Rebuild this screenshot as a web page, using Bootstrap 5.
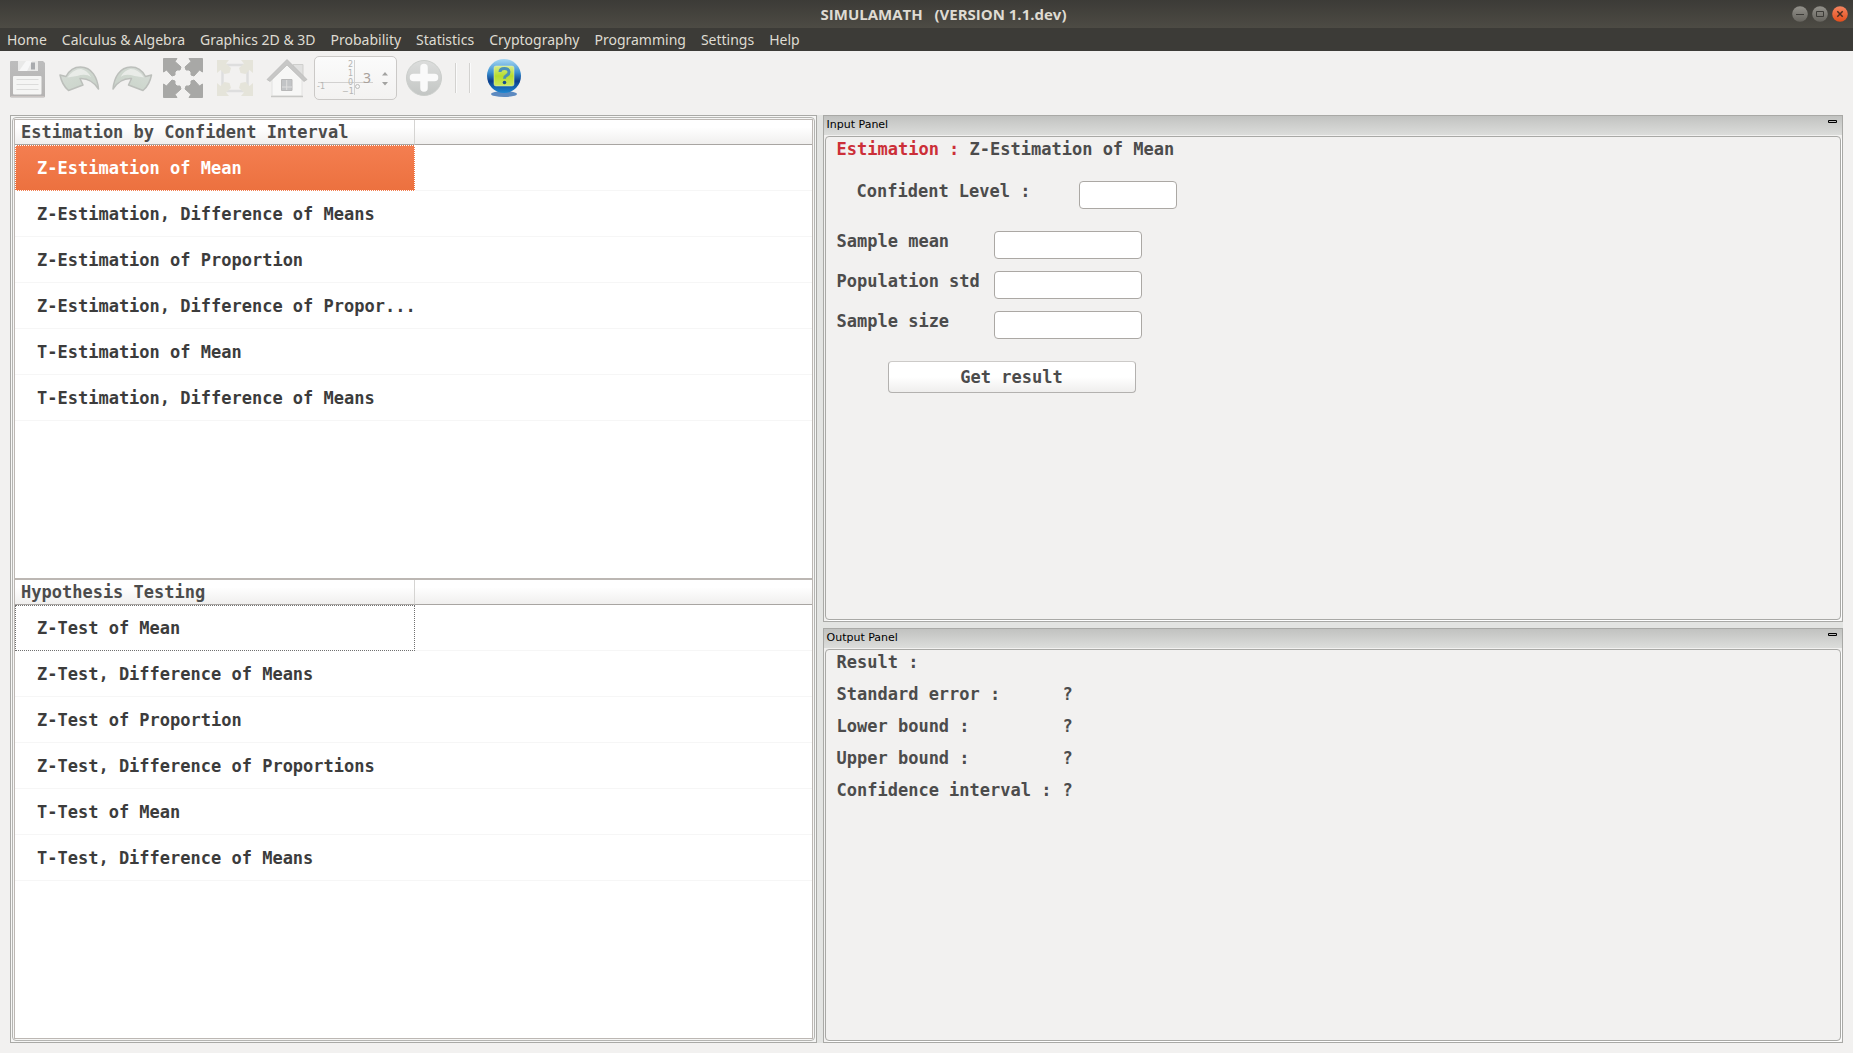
<!DOCTYPE html>
<html lang="en">
<head>
<meta charset="utf-8">
<meta name="viewport" content="width=device-width, initial-scale=1">
<title>SIMULAMATH (VERSION 1.1.dev)</title>
<link href="https://cdn.jsdelivr.net/npm/bootstrap@5.3.0/dist/css/bootstrap.min.css" rel="stylesheet">
<style>
body{background:#f2f1f0;font-family:"Noto Sans","Open Sans",sans-serif;font-size:14px;color:#4c4c4c}
button{border:0;background:none;padding:0;line-height:0}
svg{display:block}
.titlebar{height:28px;background:linear-gradient(#3c3b37,#4d4b44);color:#dfdbd2;padding:0 5px 0 95px}
.titlebar h1{font-size:15px;line-height:28px;font-weight:700;font-family:"Open Sans","Noto Sans",sans-serif}
.menubar{height:23px;background:#3c3b37;padding:0 7px;gap:15px}
.menubar a{color:#dfdbd2;text-decoration:none;line-height:23px;font-size:14px}
.tools{height:64px;padding:5px 10px 0}
.tools .tool-row{height:44px}
.plotcount{width:83px;height:44px;border:1px solid #cbc9c7;border-radius:5px;background:linear-gradient(#fbfbfb,#f3f2f1)}
.plotcount input{position:absolute;left:48px;top:11px;width:18px;height:20px;border:0;padding:0;background:none;color:#a9a19b;font-size:14px;line-height:20px;appearance:textfield;-moz-appearance:textfield}
.plotcount input::-webkit-inner-spin-button{-webkit-appearance:none;margin:0}
.vline{width:2px;height:30px;background:linear-gradient(90deg,#d3d2d0 50%,#fbfbfb 50%)}
.mono{font-family:"DejaVu Sans Mono","Liberation Mono",monospace;font-weight:700;font-size:17px;line-height:20px}
.work{padding:0 10px 10px}
.leftside{flex:0 0 44%;border:1px solid #a9a9a6;padding:1px;background:#f6f6f5}
.frame-in{border:1px solid #b5b5b2;border-radius:4px;padding:1px}
.split{background:#e3e4e2;flex:0 0 6px}
.tree{flex:1 1 0;border:1px solid #bcb7b3;background:#fff}
.tree table{width:100%;table-layout:fixed;border-collapse:separate;border-spacing:0;white-space:nowrap}
.tree col.names{width:400px}
.tree th{height:25px;padding:0 6px;background:linear-gradient(#fff 30%,#f0efee);border-bottom:1px solid #a8a5a2;vertical-align:middle}
.tree th:first-child{border-right:1px solid #d5d4d2}
.tree td{height:46px;padding:0 0 0 22px;border-bottom:1px solid #f6f6f6;color:#3c3c3c;vertical-align:middle}
.tree td.picked{background:linear-gradient(#f47e50,#ec713f);color:#fff;border:1px dotted #fff;padding-left:21px}
.tree td.focused{border:1px dotted #707070;padding-left:21px}
.rightside{flex:1 1 0;background:#e3e4e2;gap:6px}
.dock{border:1px solid #a9a9a6;background:#f2f1f0;min-height:0}
.dock.in{flex:507 1 0}
.dock.out{flex:415 1 0}
.dock-head{height:19px;background:linear-gradient(#c1c2c0,#dcdddb);padding:0 5px 0 3px}
.dock-head h2{font:11px/18px "DejaVu Sans","Noto Sans",sans-serif;color:#000}
.dock-head button{padding:4px 0 4px 4px}
.dock-body{border:1px solid #a9a9a6;border-radius:4px;margin:1px;padding:2px 11px;box-shadow:1px 1px 0 #fff}
.field{height:28px}
.field input{height:28px;border:1px solid #aba8a4;border-radius:4px;background:#fff;padding:2px 6px;font-size:15px}
.field.level{margin:22px 0;padding-left:20px}
.field.level label{width:222px}
.field.level input{width:98px}
.sample label{width:157px}
.sample input{width:148px}
.sample{gap:12px}
.result-btn{width:248px;height:32px;margin:22px 0 0 51px;border:1px solid #b3b1af;border-top-color:#cccac8;border-radius:4px;background:linear-gradient(#fff 50%,#efeeed);color:#4c4c4c}
.results{display:grid;grid-template-columns:226px 1fr;row-gap:12px}
.red{color:#cc2f38}
</style>
</head>
<body class="vh-100 d-flex flex-column overflow-hidden">
<header class="titlebar d-flex align-items-center">
  <h1 class="m-0 flex-fill text-center">SIMULAMATH&nbsp;&nbsp; (VERSION 1.1.dev)</h1>
  <div class="d-flex gap-1">
    <button aria-label="Minimize"><svg width="16" height="16" viewBox="0 0 16 16"><circle cx="8" cy="8" r="7.8" fill="url(#gr)"/><path d="M4 8.5h8" stroke="#3c3b37"/></svg></button>
    <button aria-label="Maximize"><svg width="16" height="16" viewBox="0 0 16 16"><defs><linearGradient id="gr" x2="0" y2="1"><stop stop-color="#93918b"/><stop offset="1" stop-color="#66645e"/></linearGradient></defs><circle cx="8" cy="8" r="7.8" fill="url(#gr)"/><path d="M4.5 5.5h7v5h-7z" fill="none" stroke="#3c3b37"/></svg></button>
    <button aria-label="Close"><svg width="16" height="16" viewBox="0 0 16 16"><defs><linearGradient id="og" x2="0" y2="1"><stop stop-color="#f58460"/><stop offset="1" stop-color="#e34e1c"/></linearGradient></defs><circle cx="8" cy="8" r="7.8" fill="url(#og)"/><path d="M5.3 5.3l5.4 5.4M10.700 5.3l-5.400 5.400" stroke="#4a2d20" stroke-width="1.500"/></svg></button>
  </div>
</header>
<nav class="menubar d-flex">
  <a href="#">Home</a><a href="#">Calculus &amp; Algebra</a><a href="#">Graphics 2D &amp; 3D</a><a href="#">Probability</a><a href="#">Statistics</a><a href="#">Cryptography</a><a href="#">Programming</a><a href="#">Settings</a><a href="#">Help</a>
</nav>
<div class="tools">
 <div class="tool-row d-flex align-items-center">
  <button aria-label="Save"><svg width="48" height="44" viewBox="0 0 48 44"><defs><linearGradient id="sv" x2="0" y2="1"><stop stop-color="#bdbdbd"/><stop offset="1" stop-color="#b5b3b2"/></linearGradient></defs><path d="M0 6q0-1 1-1h32l2 2v33q0 1.500-1.500 1.500h-32Q0 41.500 0 40z" fill="url(#sv)"/><path d="M8 5h20v10H8z" fill="#e9e9e8"/><path d="M16 5h6l-5 10h-8z" fill="#f7f7f7"/><rect x="21" y="6.500" width="4" height="7" fill="#a9abae"/><rect x="3" y="20" width="28.500" height="18.500" rx="1" fill="#f5f5f4"/><path d="M6.500 23.500h22M6.500 28.500h22M6.500 33.500h22" stroke="#dcdcdb"/><path d="M1 40.500h33" stroke="#ccc6c4"/></svg></button>
  <button aria-label="Undo"><svg width="52" height="44" viewBox="0 0 52 44"><defs><linearGradient id="ud" x2="1" y2="1"><stop stop-color="#d8dbd8"/><stop offset=".5" stop-color="#cfd8cf"/><stop offset="1" stop-color="#c9d0c9"/></linearGradient></defs><path d="M2 19l6 1.500Q13 11 22.500 11C34 11 39.500 22 40.500 33 36 26 31 22 22 22.500l3 6.500-14.500 5.500Q4 29 2 19z" fill="url(#ud)" stroke="#bcbfbb" stroke-width="1.500" stroke-linejoin="round"/><path d="M9.500 21.500Q15 13 23 13q6 1 10 8-5-4-14-1z" fill="#f0f1ef" opacity=".75"/></svg></button>
  <button aria-label="Redo"><svg width="52" height="44" viewBox="0 0 52 44"><g transform="translate(43.5 0) scale(-1 1)"><path d="M2 19l6 1.500Q13 11 22.500 11C34 11 39.500 22 40.500 33 36 26 31 22 22 22.500l3 6.500-14.500 5.500Q4 29 2 19z" fill="url(#ud)" stroke="#bcbfbb" stroke-width="1.500" stroke-linejoin="round"/><path d="M9.500 21.500Q15 13 23 13q6 1 10 8-5-4-14-1z" fill="#f0f1ef" opacity=".75"/></g></svg></button>
  <button aria-label="Expand view"><svg width="54" height="44" viewBox="0 0 54 44"><g fill="#a8a8a6" stroke="#a8a8a6" stroke-linejoin="round"><path id="xa" d="M1.500 2.500H15L13 5.500l6 5.500-1 3h-3l-1 1-1 1v3l-3 1-5.500-6-3 2z"/><use href="#xa" transform="translate(42 0) scale(-1 1)"/><use href="#xa" transform="translate(0 44) scale(1 -1)"/><use href="#xa" transform="translate(42 44) scale(-1 -1)"/></g></svg></button>
  <button aria-label="Fit view"><svg width="50" height="44" viewBox="0 0 50 44"><rect x="6.500" y="9" width="25" height="26" fill="none" stroke="#dedede" stroke-width="2.500"/><g fill="#e5e4da"><path id="fa" d="M1 4h12l-3 3.500 5 4.500-1.500 5-5 1-4-4L1 17z"/><use href="#fa" transform="translate(38 0) scale(-1 1)"/><use href="#fa" transform="translate(0 44) scale(1 -1)"/><use href="#fa" transform="translate(38 44) scale(-1 -1)"/></g></svg></button>
  <button aria-label="Home view"><svg width="48" height="44" viewBox="0 0 48 44"><path d="M27 8.500h10V21l-10-9z" fill="#e1e1e0" stroke="#cfcfcd"/><path d="M6 23L21 8l15 15v17H6z" fill="#f7f7f6" stroke="#e2e2e1"/><path d="M5 40.500h32" stroke="#c8c8c6" stroke-width="1.500"/><path d="M1 23.500L21 3.500 41 23.500l-3 2L21 9 4 25.500z" fill="#c7c7c6" stroke="#b9b9b8" stroke-width=".7"/><path d="M15.500 23.500h10.500v11H15.500z" fill="#c2c4c6" stroke="#b8b8b8"/><path d="M20.700 24v10M16 31h10" stroke="#dedede"/></svg></button>
  <div class="plotcount position-relative">
    <svg width="81" height="42" viewBox="0 0 81 42" font-family="DejaVu Sans, sans-serif" font-size="8" fill="#b4b4b2"><path d="M3 25.500h55M39.500 3v35" stroke="#d2d1d0"/><text x="33" y="10">2</text><text x="33" y="19">1</text><text x="33" y="28">0</text><text x="2" y="32">-1</text><text x="27" y="37">−1</text><circle cx="42.500" cy="29.500" r="2" fill="#f6f6f6" stroke="#bcbcba"/><path d="M67 18.500l3-3.500 3 3.500zM67 25l3 3.500 3-3.500z" fill="#a3a3a1"/></svg>
    <input type="number" value="3" aria-label="Axes count">
  </div>
  <button class="ms-2" aria-label="Add"><svg width="50" height="44" viewBox="0 0 50 44"><defs><linearGradient id="pl" x2="0" y2="1"><stop stop-color="#dcdddc"/><stop offset="1" stop-color="#c3c6c4"/></linearGradient></defs><circle cx="19" cy="22" r="17.500" fill="url(#pl)" stroke="#cbcecb"/><path d="M19 11.500v20.500M8.500 21.500h21" stroke="#fafafa" stroke-width="7.500" stroke-linecap="round"/></svg></button>
  <span class="vline me-2"></span><span class="vline ms-1"></span>
  <button class="ms-3" aria-label="Help"><svg width="34" height="44" viewBox="1 0 34 44"><defs><linearGradient id="hb" x2="0" y2="1"><stop stop-color="#a9d8f2"/><stop offset=".4" stop-color="#3a8fd0"/><stop offset=".65" stop-color="#0b3f8c"/><stop offset="1" stop-color="#1f88d2"/></linearGradient><linearGradient id="hg" x2="0" y2="1"><stop stop-color="#d6ec8d"/><stop offset=".5" stop-color="#b7dc2c"/><stop offset="1" stop-color="#c9e860"/></linearGradient></defs><ellipse cx="18" cy="38" rx="13" ry="3" fill="#5d8ac0"/><circle cx="18" cy="20" r="17" fill="url(#hb)"/><rect x="8" y="10" width="20" height="20" rx="2" fill="url(#hg)" stroke="#e8f5bf" stroke-width=".5"/><path d="M14 16q0-3.500 4.500-3.500t4.500 3.500q0 2.500-2.500 3.500-2 1-2 3.200" fill="none" stroke="#4a8fb8" stroke-width="3"/><circle cx="18.500" cy="26.500" r="1.800" fill="#174f8d"/></svg></button>
 </div>
</div>
<main class="work d-flex flex-fill" style="min-height:0">
  <section class="leftside d-flex">
    <div class="frame-in d-flex flex-column flex-fill mono">
      <div class="tree"><table><colgroup><col class="names"><col></colgroup>
        <thead><tr><th>Estimation by Confident Interval</th><th></th></tr></thead>
        <tbody>
        <tr><td class="picked">Z-Estimation of Mean</td><td></td></tr>
        <tr><td>Z-Estimation, Difference of Means</td><td></td></tr>
        <tr><td>Z-Estimation of Proportion</td><td></td></tr>
        <tr><td>Z-Estimation, Difference of Propor...</td><td></td></tr>
        <tr><td>T-Estimation of Mean</td><td></td></tr>
        <tr><td>T-Estimation, Difference of Means</td><td></td></tr>
        </tbody></table></div>
      <div class="tree"><table><colgroup><col class="names"><col></colgroup>
        <thead><tr><th>Hypothesis Testing</th><th></th></tr></thead>
        <tbody>
        <tr><td class="focused">Z-Test of Mean</td><td></td></tr>
        <tr><td>Z-Test, Difference of Means</td><td></td></tr>
        <tr><td>Z-Test of Proportion</td><td></td></tr>
        <tr><td>Z-Test, Difference of Proportions</td><td></td></tr>
        <tr><td>T-Test of Mean</td><td></td></tr>
        <tr><td>T-Test, Difference of Means</td><td></td></tr>
        </tbody></table></div>
    </div>
  </section>
  <div class="split"></div>
  <div class="rightside d-flex flex-column">
    <section class="dock in d-flex flex-column">
      <div class="dock-head d-flex justify-content-between align-items-start"><h2 class="m-0">Input Panel</h2>
        <button aria-label="Collapse input panel"><svg width="9" height="3" viewBox="0 0 9 3"><path d="M.5.5h8v2h-8z" fill="#bbb" stroke="#000"/></svg></button></div>
      <form class="dock-body flex-fill mono">
        <div><span class="red">Estimation :</span> Z-Estimation of Mean</div>
        <div class="field level d-flex align-items-start"><label for="lvl">Confident Level :</label><input id="lvl" type="text"></div>
        <div class="sample d-flex flex-column">
          <div class="field d-flex align-items-start"><label for="mean">Sample mean</label><input id="mean" type="text"></div>
          <div class="field d-flex align-items-start"><label for="std">Population std</label><input id="std" type="text"></div>
          <div class="field d-flex align-items-start"><label for="size">Sample size</label><input id="size" type="text"></div>
        </div>
        <button type="button" class="result-btn mono">Get result</button>
      </form>
    </section>
    <section class="dock out d-flex flex-column">
      <div class="dock-head d-flex justify-content-between align-items-start"><h2 class="m-0">Output Panel</h2>
        <button aria-label="Collapse output panel"><svg width="9" height="3" viewBox="0 0 9 3"><path d="M.5.5h8v2h-8z" fill="#bbb" stroke="#000"/></svg></button></div>
      <div class="dock-body flex-fill mono">
        <div class="results">
          <span>Result :</span><span></span>
          <span>Standard error :</span><span>?</span>
          <span>Lower bound :</span><span>?</span>
          <span>Upper bound :</span><span>?</span>
          <span>Confidence interval :</span><span>?</span>
        </div>
      </div>
    </section>
  </div>
</main>
<script src="https://cdn.jsdelivr.net/npm/bootstrap@5.3.0/dist/js/bootstrap.bundle.min.js"></script>
</body>
</html>
